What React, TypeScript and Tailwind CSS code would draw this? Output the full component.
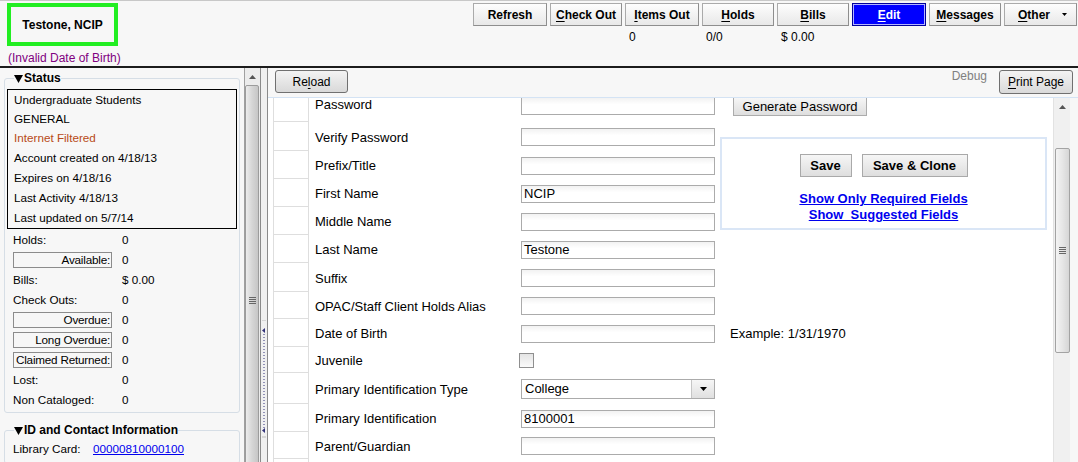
import React from "react";

type TopButton = { label: string; u: number; w: string; edit?: boolean; menu?: boolean };

const topButtons: TopButton[] = [
  { label: "Refresh", u: -1, w: "w-[74px]" },
  { label: "Check Out", u: 0, w: "w-[72px]" },
  { label: "Items Out", u: 0, w: "w-[74px]" },
  { label: "Holds", u: 0, w: "w-[72px]" },
  { label: "Bills", u: 0, w: "w-[72px]" },
  { label: "Edit", u: 0, w: "w-[74px]", edit: true },
  { label: "Messages", u: 0, w: "w-[72px]" },
  { label: "Other", u: 0, w: "w-[73px]", menu: true },
];

const counts = ["", "", "0", "0/0", "$ 0.00", "", "", ""];

function Accel({ text, idx }: { text: string; idx: number }) {
  if (idx < 0) return <>{text}</>;
  return (
    <>
      {text.slice(0, idx)}
      <span className="underline underline-offset-2">{text[idx]}</span>
      {text.slice(idx + 1)}
    </>
  );
}

function Triangle() {
  return (
    <svg width="9" height="8" viewBox="0 0 9 8" className="inline-block mr-[1px]">
      <path d="M0 0H9L4.5 8Z" fill="#000" />
    </svg>
  );
}

function Grip() {
  return (
    <div className="flex flex-col gap-[1px]">
      <div className="w-[7px] h-[1px] bg-[#666]" />
      <div className="w-[7px] h-[1px] bg-[#666]" />
      <div className="w-[7px] h-[1px] bg-[#666]" />
      <div className="w-[7px] h-[1px] bg-[#666]" />
    </div>
  );
}

const statusLines = [
  { t: "Undergraduate Students", h: "h-[19px]" },
  { t: "GENERAL", h: "h-[19px]" },
  { t: "Internet Filtered", h: "h-[20px]", c: "text-[#b84a16]" },
  { t: "Account created on 4/18/13", h: "h-[20px]" },
  { t: "Expires on 4/18/16", h: "h-[20px]" },
  { t: "Last Activity 4/18/13", h: "h-[20px]" },
  { t: "Last updated on 5/7/14", h: "h-[20px]" },
];

const stats = [
  { l: "Holds:", v: "0" },
  { l: "Available:", v: "0", box: true },
  { l: "Bills:", v: "$ 0.00" },
  { l: "Check Outs:", v: "0" },
  { l: "Overdue:", v: "0", box: true },
  { l: "Long Overdue:", v: "0", box: true },
  { l: "Claimed Returned:", v: "0", box: true },
  { l: "Lost:", v: "0" },
  { l: "Non Cataloged:", v: "0" },
];

type Row = { label: string; h: string; field?: "input" | "checkbox" | "select" | "none"; value?: string; extra?: "gen" | "example"; top?: boolean };

const rows: Row[] = [
  { label: "Password", h: "h-[24px]", extra: "gen", top: true },
  { label: "Verify Password", h: "h-[29px]" },
  { label: "Prefix/Title", h: "h-[28px]" },
  { label: "First Name", h: "h-[28px]", value: "NCIP" },
  { label: "Middle Name", h: "h-[28px]" },
  { label: "Last Name", h: "h-[28px]", value: "Testone" },
  { label: "Suffix", h: "h-[29px]" },
  { label: "OPAC/Staff Client Holds Alias", h: "h-[27px]" },
  { label: "Date of Birth", h: "h-[28px]", extra: "example" },
  { label: "Juvenile", h: "h-[26px]", field: "checkbox" },
  { label: "Primary Identification Type", h: "h-[31px]", field: "select", value: "College" },
  { label: "Primary Identification", h: "h-[28px]", value: "8100001" },
  { label: "Parent/Guardian", h: "h-[27px]" },
  { label: "", h: "h-[28px]", field: "none" },
];

function Field({ r }: { r: Row }) {
  if (r.field === "none") return null;
  if (r.field === "checkbox")
    return <div className="ml-[-2px] w-[15px] h-[15px] border border-[#8f8f8f] bg-linear-to-b from-[#e4e4e4] to-[#fafafa]" />;
  if (r.field === "select")
    return (
      <div className="w-[194px] h-[20px] border border-[#ababab] bg-white flex text-[13px]">
        <div className="flex-1 pl-[3px] flex items-center">{r.value}</div>
        <div className="w-[23px] border-l border-[#c6c6c6] bg-linear-to-b from-[#f6f6f6] to-[#e0e0e0] flex items-center justify-center">
          <svg width="7" height="4" viewBox="0 0 7 4">
            <path d="M0 0H7L3.5 4Z" fill="#000" />
          </svg>
        </div>
      </div>
    );
  return (
    <div className={`w-[194px] h-[18px] border border-[#ababab] bg-linear-to-b from-[#f2f2f2] to-white to-[40%] pl-[2px] text-[13px] leading-[16px] ${r.top ? "mt-[-1px]" : ""}`}>
      {r.value}
    </div>
  );
}

export default function App() {
  return (
    <div className="w-[1078px] h-[462px] overflow-hidden bg-[#f7f7f7] flex flex-col font-['Liberation_Sans',Arial,sans-serif] text-black">
      {/* header */}
      <header className="h-[68px] shrink-0 border-t border-[#c8c8c8] border-b-2 border-b-[#1c1c1c] flex">
        <div className="flex flex-col">
          <div className="ml-[7px] mt-[2px] w-[111px] h-[43px] border-[4px] border-[#22ee22] flex items-center justify-center text-[12px] font-bold">
            Testone, NCIP
          </div>
          <div className="ml-[8px] mt-[5px] text-[12px] leading-[14px] text-[#800080]">(Invalid Date of Birth)</div>
        </div>
        <div className="ml-auto mr-[1px] pt-[2px] flex flex-col">
          <div className="flex gap-[3px]">
            {topButtons.map((b) => (
              <div
                key={b.label}
                className={`${b.w} h-[23px] flex items-center text-[12px] font-bold ${
                  b.edit
                    ? "justify-center bg-[#0000ff] text-white border border-[#00009a] shadow-[inset_0_0_0_1px_#b4b4ff]"
                    : "bg-linear-to-b from-[#fdfdfd] to-[#e8e8e8] border border-[#aaaaaa] border-r-[#8e8e8e] border-b-[#8e8e8e]"
                } ${b.menu ? "justify-between pl-[13px] pr-[9px]" : b.edit ? "" : "justify-center"}`}
              >
                <span>
                  <Accel text={b.label} idx={b.u} />
                </span>
                {b.menu && (
                  <svg width="5" height="3" viewBox="0 0 5 3">
                    <path d="M0 0H5L2.5 3Z" fill="#000" />
                  </svg>
                )}
              </div>
            ))}
          </div>
          <div className="flex gap-[3px] mt-[4px] text-[12px] leading-[14px]">
            {topButtons.map((b, i) => (
              <div key={b.label} className={`${b.w} pl-[4px]`}>
                {counts[i]}
              </div>
            ))}
          </div>
        </div>
      </header>

      <div className="flex flex-1 min-h-0">
        {/* sidebar */}
        <aside className="w-[244px] shrink-0 pl-[4px] pt-[3px] text-[11.7px] overflow-hidden">
          <fieldset className="w-[236px] border border-[#d6dee6] rounded-[3px] pb-[2px]">
            <legend className="ml-[9px] font-bold text-[12px] leading-[14px]">
              <Triangle />
              Status
            </legend>
            <div className="mx-[2px] mt-[4px] border border-black">
              {statusLines.map((s) => (
                <div key={s.t} className={`${s.h} flex items-center pl-[6px] ${s.c ?? ""}`}>
                  {s.t}
                </div>
              ))}
            </div>
            <div className="mt-[1px] pl-[8px]">
              {stats.map((s) => (
                <div key={s.l} className="h-[20px] flex items-center">
                  {s.box ? (
                    <div className="w-[99px] h-[16px] border border-[#8c8c8c] flex items-center justify-end pr-[1px] whitespace-nowrap tracking-[-0.2px]">
                      {s.l}
                    </div>
                  ) : (
                    <div className="w-[99px] whitespace-nowrap">{s.l}</div>
                  )}
                  <div className="ml-[10px]">{s.v}</div>
                </div>
              ))}
            </div>
          </fieldset>
          <fieldset className="mt-[10px] w-[236px] border border-[#d6dee6] rounded-[3px] pb-[4px]">
            <legend className="ml-[9px] font-bold text-[12px] leading-[14px]">
              <Triangle />
              ID and Contact Information
            </legend>
            <div className="mt-[2px] pl-[8px] h-[20px] flex items-center">
              <div className="w-[80px]">Library Card:</div>
              <a className="text-[#0000ee] underline">00000810000100</a>
            </div>
          </fieldset>
        </aside>

        {/* sidebar scrollbar */}
        <div className="w-[16px] shrink-0 bg-[#ececec] border-l border-[#a0a0a0] flex flex-col overflow-hidden">
          <div className="h-[17px] shrink-0 flex items-center justify-center">
            <svg width="7" height="4" viewBox="0 0 7 4">
              <path d="M0 4H7L3.5 0Z" fill="#555" />
            </svg>
          </div>
          <div className="w-[14px] h-[430px] shrink-0 border border-[#9c9c9c] rounded-[2px] bg-linear-to-r from-[#ececec] via-[#d6d6d6] to-[#c6c6c6] flex items-center justify-center">
            <Grip />
          </div>
        </div>

        {/* splitter */}
        <div className="w-[8px] shrink-0 border-x border-[#8a8a8a] bg-[#f0f0f0]">
          <svg width="6" height="120" viewBox="0 0 6 120" className="mt-[252px]">
            <path d="M1 0H5" stroke="#bbb" />
            <path d="M4 8L1 10.5L4 13Z" fill="#33337a" />
            <path d="M3 14V108" stroke="#33337a" strokeDasharray="1 2" />
            <path d="M4 108L1 110.5L4 113Z" fill="#33337a" />
            <path d="M1 117H5" stroke="#bbb" />
          </svg>
        </div>

        {/* main panel */}
        <main className="flex-1 flex flex-col min-w-0">
          <div className="h-[30px] shrink-0 border-b border-[#d4e3f4] flex items-start text-[12px]">
            <div className="ml-[7px] mt-[2px] w-[73px] h-[23px] rounded-[3px] border border-[#707070] bg-linear-to-b from-[#f3f3f3] to-[#d9d9d9] flex items-center justify-center">
              Re<span className="underline underline-offset-2">l</span>oad
            </div>
            <div className="ml-auto mt-[1px] leading-[14px] text-[#808080]">Debug</div>
            <div className="ml-[12px] mr-[5px] mt-[2px] w-[74px] h-[24px] rounded-[3px] border border-[#707070] bg-linear-to-b from-[#f3f3f3] to-[#d9d9d9] flex items-center justify-center">
              <span className="underline underline-offset-2">P</span>rint Page
            </div>
          </div>

          <div className="flex-1 flex min-h-0">
            <div className="relative w-[785px] shrink-0 bg-white overflow-hidden">
              {rows.map((r, i) => (
                <div key={i} className={`${r.h} flex ${r.top ? "items-start" : "items-center pt-[1px]"}`}>
                  <div className="w-[5px] shrink-0" />
                  <div className={`w-[36px] shrink-0 border-x border-b border-[#dedede] ${r.top ? "h-full" : "self-stretch mt-[-1px]"}`} />
                  <div className={`w-[212px] shrink-0 pl-[6px] text-[13px] leading-[15px] ${r.top ? "mt-[-1px]" : ""}`}>{r.label}</div>
                  <Field r={r} />
                  {r.extra === "gen" && (
                    <div className="ml-[18px] mt-[-1px] w-[134px] h-[19px] border border-[#acacac] bg-linear-to-b from-[#f6f6f6] to-[#dedede] flex items-center justify-center text-[13px]">
                      Generate Password
                    </div>
                  )}
                  {r.extra === "example" && <div className="ml-[15px] text-[13px]">Example: 1/31/1970</div>}
                </div>
              ))}

              {/* save panel floating over the form */}
              <div className="absolute left-[452px] top-[39px] w-[327px] h-[93px] border-2 border-[#dae6f6] bg-white flex flex-col items-center pt-[15px]">
                <div className="flex gap-[10px] text-[13px] font-bold">
                  <div className="w-[52px] h-[23px] border border-[#a9a9a9] bg-linear-to-b from-[#f6f6f6] to-[#dedede] flex items-center justify-center">Save</div>
                  <div className="w-[106px] h-[23px] border border-[#a9a9a9] bg-linear-to-b from-[#f6f6f6] to-[#dedede] flex items-center justify-center">Save &amp; Clone</div>
                </div>
                <div className="mt-[14px] flex flex-col items-center text-[13px] font-bold leading-[16px] text-[#0000ee]">
                  <a className="underline">Show Only Required Fields</a>
                  <a className="underline whitespace-pre">Show  Suggested Fields</a>
                </div>
              </div>
            </div>

            {/* right scrollbar */}
            <div className="w-[17px] shrink-0 bg-[#f0f0f0] border-l border-[#e2e2e2] flex flex-col items-center">
              <div className="h-[17px] shrink-0 flex items-center justify-center">
                <svg width="7" height="4" viewBox="0 0 7 4">
                  <path d="M0 4H7L3.5 0Z" fill="#555" />
                </svg>
              </div>
              <div className="mt-[33px] w-[15px] h-[205px] border border-[#a3a3a3] rounded-[2px] bg-linear-to-r from-[#f4f4f4] via-[#e6e6e6] to-[#d6d6d6] flex items-center justify-center">
                <Grip />
              </div>
            </div>
            <div className="flex-1" />
          </div>
        </main>
      </div>
    </div>
  );
}
